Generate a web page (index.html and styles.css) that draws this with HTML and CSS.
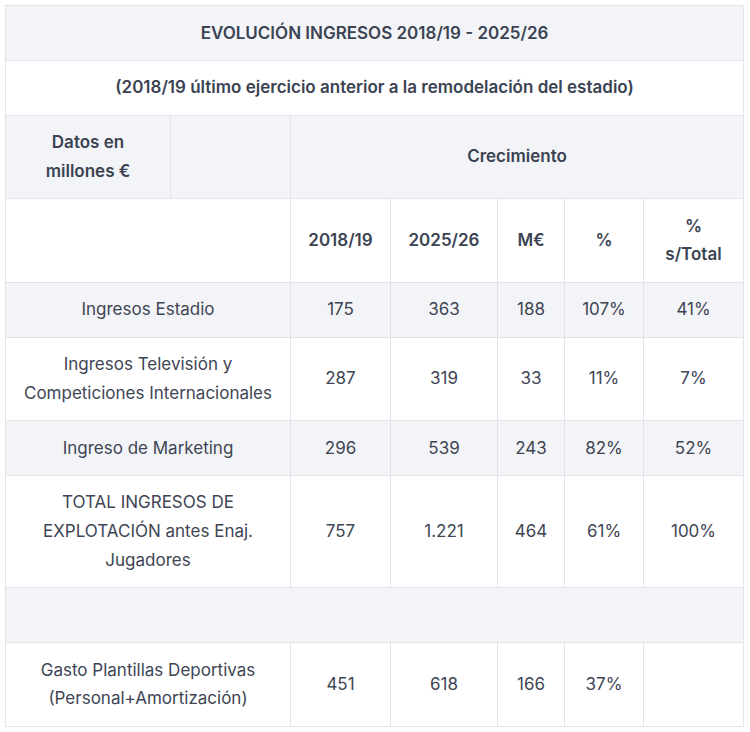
FILE: index.html
```html
<!DOCTYPE html>
<html lang="es">
<head>
<meta charset="utf-8">
<title>Evolución ingresos</title>
<link rel="stylesheet" href="styles.css">
</head>
<body>
<table class="data">
  <colgroup>
    <col class="c1"><col class="c2"><col class="c3"><col class="c4"><col class="c5"><col class="c6"><col class="c7">
  </colgroup>
  <tbody>
    <tr class="alt"><td colspan="7" class="head">EVOLUCIÓN INGRESOS 2018/19 - 2025/26</td></tr>
    <tr><td colspan="7" class="head">(2018/19 último ejercicio anterior a la remodelación del estadio)</td></tr>
    <tr class="alt"><td class="head">Datos en<br>millones €</td><td></td><td colspan="5" class="head">Crecimiento</td></tr>
    <tr><td colspan="2"></td><td class="head">2018/19</td><td class="head">2025/26</td><td class="head">M€</td><td class="head">%</td><td class="head">%<br>s/Total</td></tr>
    <tr class="alt"><td colspan="2">Ingresos Estadio</td><td>175</td><td>363</td><td>188</td><td>107%</td><td>41%</td></tr>
    <tr><td colspan="2">Ingresos Televisión y<br>Competiciones Internacionales</td><td>287</td><td>319</td><td>33</td><td>11%</td><td>7%</td></tr>
    <tr class="alt"><td colspan="2">Ingreso de Marketing</td><td>296</td><td>539</td><td>243</td><td>82%</td><td>52%</td></tr>
    <tr><td colspan="2">TOTAL INGRESOS DE<br>EXPLOTACIÓN antes Enaj.<br>Jugadores</td><td>757</td><td>1.221</td><td>464</td><td>61%</td><td>100%</td></tr>
    <tr class="alt"><td colspan="7" class="empty"></td></tr>
    <tr><td colspan="2">Gasto Plantillas Deportivas<br>(Personal+Amortización)</td><td>451</td><td>618</td><td>166</td><td>37%</td><td></td></tr>
  </tbody>
</table>
</body>
</html>
```
FILE: styles.css
```css
html, body {
  margin: 0;
  padding: 0;
  background: #ffffff;
}
body {
  padding: 5px 0 0 5px;
  font-family: Inter, "Noto Sans", "Liberation Sans", sans-serif;
  color: #3e4554;
}
.data {
  border-collapse: collapse;
  table-layout: fixed;
  width: 738px;
  font-size: 17px;
  line-height: 28.8px;
}
.c1 { width: 165px; }
.c2 { width: 120px; }
.c3 { width: 100px; }
.c4 { width: 107px; }
.c5 { width: 67px; }
.c6 { width: 79px; }
.c7 { width: 100px; }
.data td {
  border: 1px solid #e2e4e9;
  padding: 12.5px 6px;
  text-align: center;
  vertical-align: middle;
  height: 28.8px;
  box-sizing: content-box;
}
.data tr.alt td {
  background: #f3f4f7;
}
.data td.head {
  font-weight: 600;
  color: #3b4353;
}
```
